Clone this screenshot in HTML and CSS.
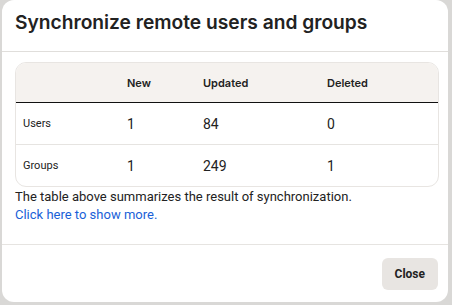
FILE: index.html
```html
<!DOCTYPE html>
<html lang="en">
<head>
    <meta charset="UTF-8">
    <title>Synchronize remote users and groups</title>
    <link rel="stylesheet" href="styles.css">
</head>
<body>
    <div class="modal">
        <div class="modal-header">
            <h1 class="modal-title">Synchronize remote users and groups</h1>
        </div>
        <div class="modal-body">
            <div class="table-card">
                <table class="sync-table">
                    <colgroup>
                        <col class="col-name">
                        <col class="col-new">
                        <col class="col-updated">
                        <col class="col-deleted">
                    </colgroup>
                    <thead>
                        <tr>
                            <th></th>
                            <th>New</th>
                            <th>Updated</th>
                            <th>Deleted</th>
                        </tr>
                    </thead>
                    <tbody>
                        <tr>
                            <td class="row-label">Users</td>
                            <td>1</td>
                            <td>84</td>
                            <td>0</td>
                        </tr>
                        <tr>
                            <td class="row-label">Groups</td>
                            <td>1</td>
                            <td>249</td>
                            <td>1</td>
                        </tr>
                    </tbody>
                </table>
            </div>
            <p class="summary">The table above summarizes the result of synchronization.</p>
            <a class="more-link" href="#">Click here to show more.</a>
        </div>
        <div class="modal-footer">
            <button class="button" type="button">Close</button>
        </div>
    </div>
</body>
</html>
```

FILE: styles.css
```css
html, body {
    margin: 0;
    height: 100%;
}

body {
    background: #d9d8d6;
    font-family: Roboto, "Liberation Sans", sans-serif;
    color: #1f1f1f;
}

.modal {
    margin: 0 4px 0 2px;
    height: 302px;
    background: #fff;
    border-radius: 12px;
    display: flex;
    flex-direction: column;
}

.modal-header {
    height: 51px;
    padding: 0 13px;
    display: flex;
    align-items: center;
    border-bottom: 1px solid #e0dedb;
}

.modal-title {
    margin: 0 0 8px;
    font-family: Inter, sans-serif;
    font-size: 19.2px;
    font-weight: 600;
    color: #222;
}

.modal-body {
    padding: 10px 9px 0 13px;
    height: 182px;
}

.table-card {
    border: 1px solid #e8e5e2;
    border-radius: 11px;
    overflow: hidden;
}

.sync-table {
    width: 100%;
    border-collapse: collapse;
    table-layout: fixed;
}

.col-name { width: 104px; }
.col-new { width: 76px; }
.col-updated { width: 124px; }

.sync-table th {
    height: 39px;
    background: #f5f2ef;
    border-bottom: 1px solid #111;
    padding: 0 7px;
    text-align: left;
    font-family: Inter, sans-serif;
    font-size: 11px;
    font-weight: 600;
    color: #222;
}

.sync-table td {
    height: 41px;
    padding: 0 7px;
    font-size: 14px;
    color: #222;
}

.sync-table tbody tr + tr td {
    border-top: 1px solid #e6e4e1;
}

.sync-table .row-label {
    font-size: 11px;
}

.summary {
    margin: 0;
    padding-top: 1px;
    line-height: 18px;
    font-size: 13px;
    color: #222;
}

.more-link {
    display: block;
    line-height: 18px;
    font-size: 13px;
    color: #1a5fd8;
    text-decoration: none;
}

.modal-footer {
    border-top: 1px solid #e6e4e1;
    flex: 1;
    display: flex;
    justify-content: flex-end;
    align-items: center;
    padding: 0 10px 0 0;
}

.button {
    height: 32px;
    padding: 0 13px;
    border: 0;
    border-radius: 6px;
    background: #e8e5e2;
    font-family: Roboto, "Liberation Sans", sans-serif;
    font-size: 12px;
    font-weight: 700;
    color: #222;
}
```
